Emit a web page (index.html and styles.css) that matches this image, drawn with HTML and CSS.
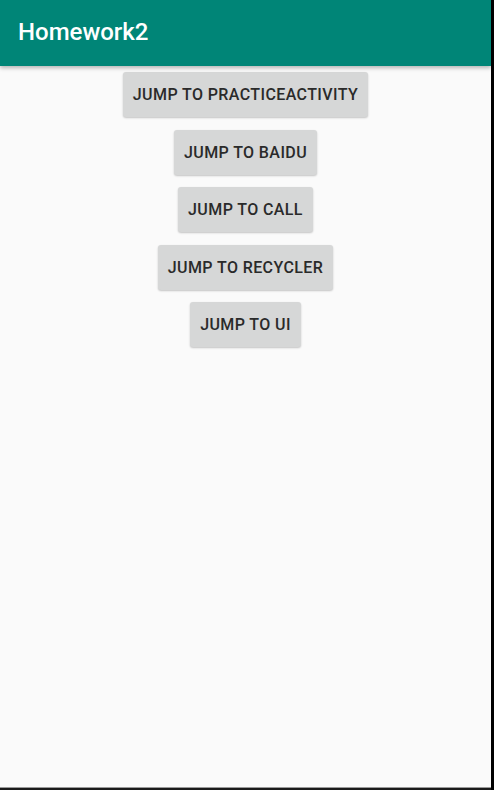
FILE: index.html
```html
<!DOCTYPE html>
<html>
<head>
<meta charset="utf-8">
<link rel="stylesheet" href="styles.css">
</head>
<body>
<div class="frame">
  <div class="screen">
    <header class="appbar"><h1 class="title">Homework2</h1></header>
    <main class="content">
      <button class="btn">Jump to PracticeActivity</button>
      <button class="btn">Jump to Baidu</button>
      <button class="btn">Jump to Call</button>
      <button class="btn">Jump to Recycler</button>
      <button class="btn">Jump to UI</button>
    </main>
  </div>
  <div class="edge-right"></div>
</div>
</body>
</html>
```
FILE: styles.css
```css
html, body {
  margin: 0;
  padding: 0;
  width: 494px;
  height: 790px;
  overflow: hidden;
  background: #1a1a1a;
}
.frame {
  display: flex;
  width: 494px;
  height: 790px;
}
.screen {
  width: 491px;
  height: 787px;
  background: #fafafa;
  display: flex;
  flex-direction: column;
  border-bottom: 1px solid #9a9a9a;
}
.edge-right {
  width: 3px;
  background: #000;
}
.appbar {
  height: 66px;
  background: #008577;
  display: flex;
  align-items: center;
  padding-left: 18px;
  box-shadow: 0 2px 4px rgba(0,0,0,0.28);
  position: relative;
  z-index: 1;
}
.title {
  margin: 0;
  font-family: Roboto, "Noto Sans", sans-serif;
  font-weight: 500;
  font-size: 24px;
  color: #fff;
  padding-bottom: 2px;
}
.content {
  display: flex;
  flex-direction: column;
  align-items: center;
  gap: 12.5px;
  padding-top: 6px;
}
.btn {
  height: 45px;
  padding: 0 10px;
  border: none;
  border-radius: 3px;
  background: #d6d7d7;
  box-shadow: 0 1px 2px rgba(0,0,0,0.22);
  font-family: Roboto, "Noto Sans", sans-serif;
  font-weight: 500;
  font-size: 16px;
  color: #2a2a2a;
  text-transform: uppercase;
  letter-spacing: 0.4px;
}
```
